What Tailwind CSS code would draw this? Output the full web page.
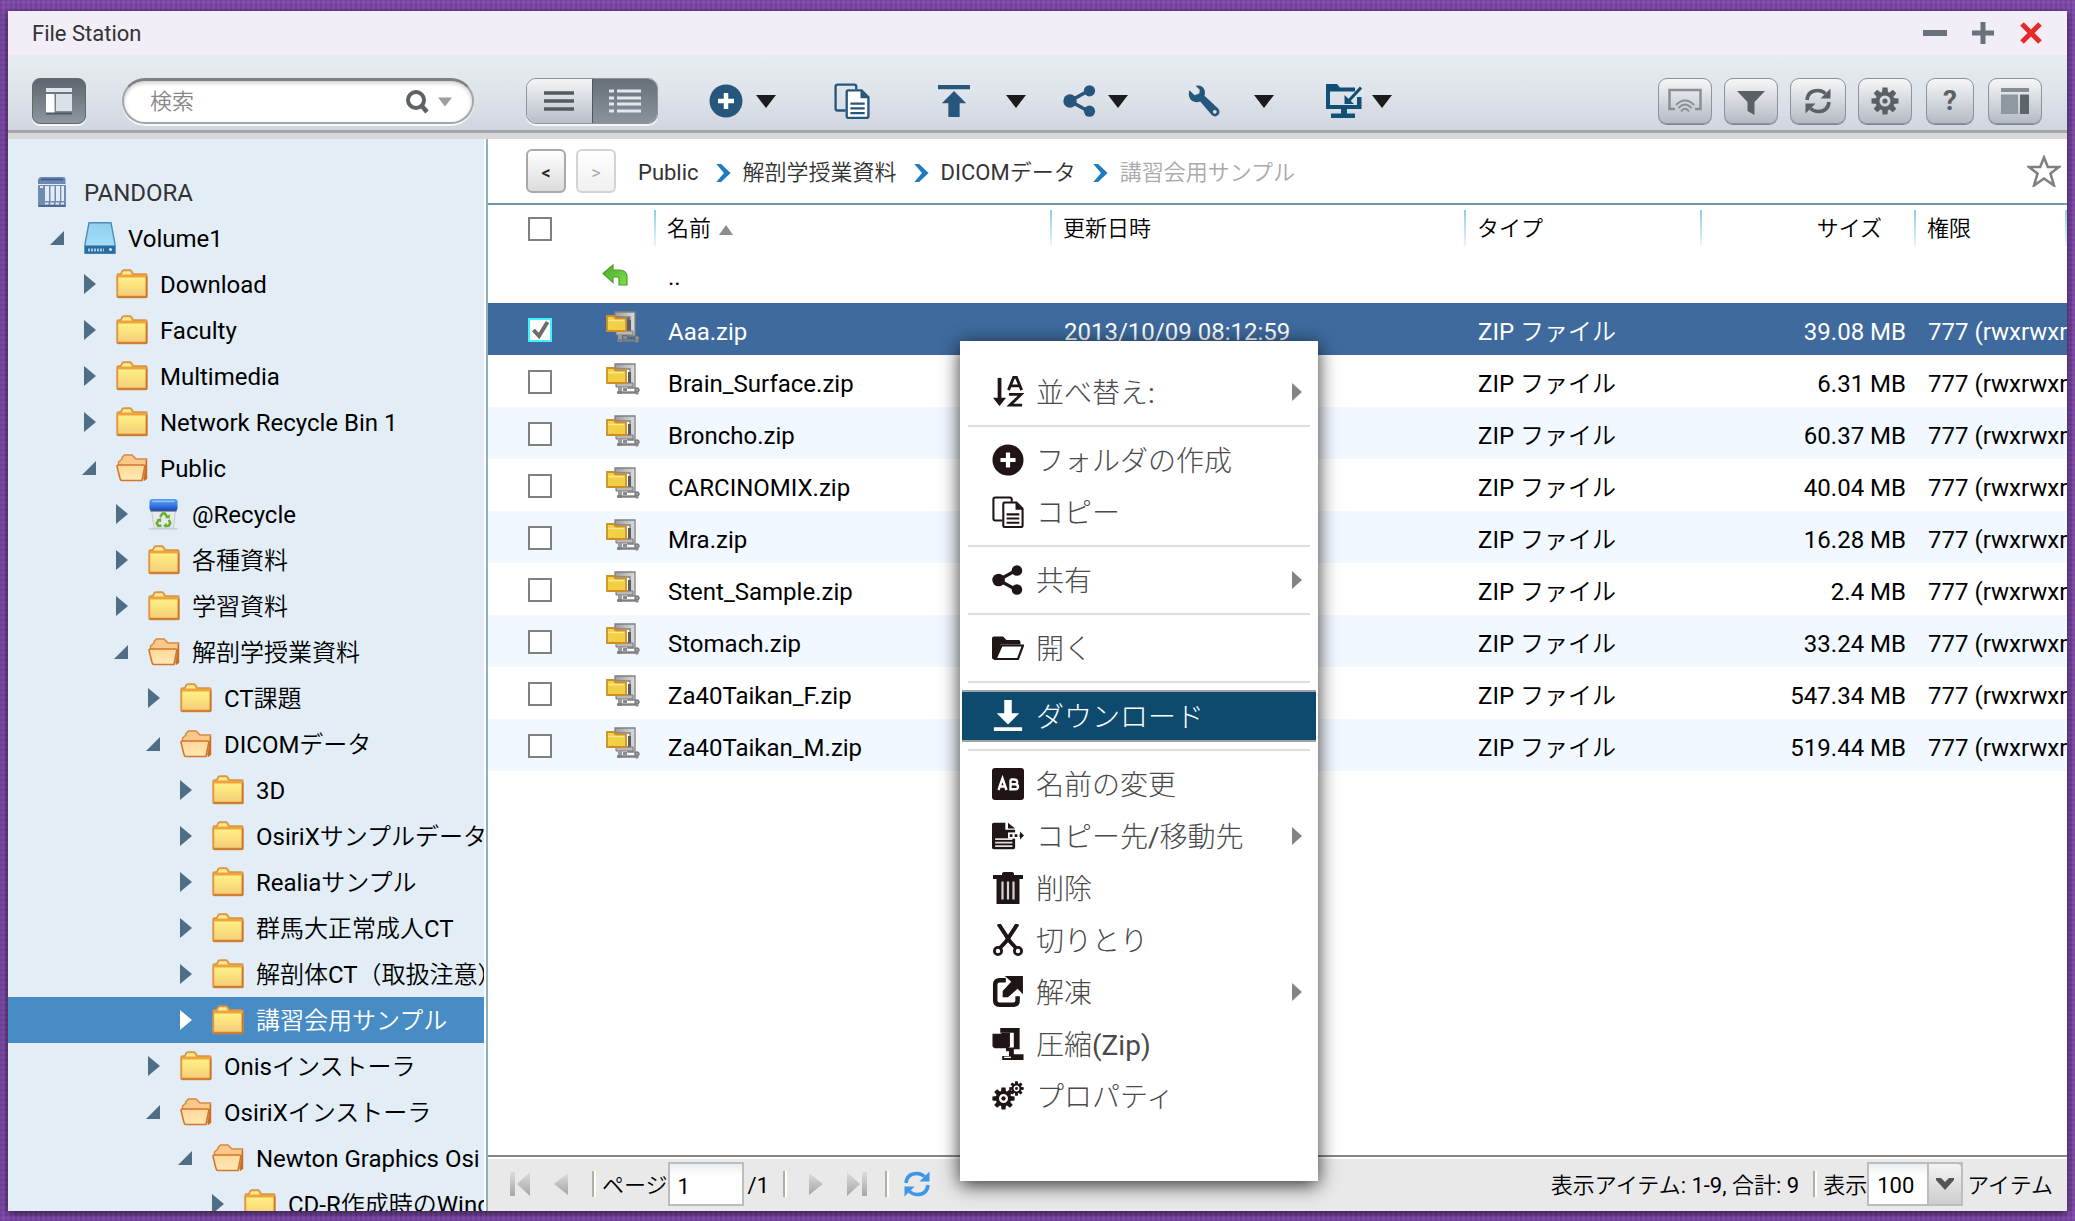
<!DOCTYPE html>
<html lang="ja">
<head>
<meta charset="utf-8">
<meta name="viewport" content="width=device-width, initial-scale=1">
<title>File Station</title>
<script src="https://cdn.jsdelivr.net/npm/@tailwindcss/browser@4"></script>
</head>
<body class="h-screen overflow-hidden bg-[#8450ae] bg-[repeating-linear-gradient(90deg,rgba(50,10,90,.14)_0_2px,transparent_2px_5px),repeating-linear-gradient(0deg,rgba(50,10,90,.1)_0_2px,transparent_2px_5px)] px-2 pt-[11px] pb-[10px] text-black [font-family:Roboto,'Noto_Sans_CJK_JP_DemiLight','Noto_Sans_CJK_JP',sans-serif]">

<!-- Shared icon shapes -->
<svg class="absolute h-0 w-0" aria-hidden="true">
  <defs>
    <linearGradient id="g-folder" x1="0" y1="0" x2="0" y2="1"><stop offset="0" stop-color="#fff08c"/><stop offset=".5" stop-color="#fbe07a"/><stop offset="1" stop-color="#f2cf80"/></linearGradient>
    <linearGradient id="g-open" x1="0" y1="0" x2="0" y2="1"><stop offset="0" stop-color="#ffd79a"/><stop offset="1" stop-color="#ffeab5"/></linearGradient>
    <linearGradient id="g-disk" x1="0" y1="0" x2="0" y2="1"><stop offset="0" stop-color="#8fd0f0"/><stop offset="1" stop-color="#a9e3fa"/></linearGradient>
    <linearGradient id="g-lid" x1="0" y1="0" x2="0" y2="1"><stop offset="0" stop-color="#5a9cf0"/><stop offset=".5" stop-color="#3d7fe4"/><stop offset="1" stop-color="#1748c4"/></linearGradient>
    <linearGradient id="g-clamp" x1="0" y1="0" x2="1" y2="0"><stop offset="0" stop-color="#9a9a9a"/><stop offset="1" stop-color="#dcdcdc"/></linearGradient>
    <linearGradient id="g-green" x1="0" y1="0" x2="1" y2="1"><stop offset="0" stop-color="#4aa62c"/><stop offset="1" stop-color="#7fe04a"/></linearGradient>
    <linearGradient id="g-nav" x1="0" y1="0" x2="0" y2="1"><stop offset="0" stop-color="#dcdcdc"/><stop offset="1" stop-color="#a6a6a6"/></linearGradient>
  </defs>
  <symbol id="i-folder" viewBox="0 0 32 30"><path d="M1 6.500Q1 5 2.500 5H4.500L6.500 1.500Q7 1 8 1H14Q15 1 15.600 2L17.500 5H29.500Q31 5 31 6.500V27Q31 28.500 29.500 28.500H2.500Q1 28.500 1 27Z" fill="#f0a53a" stroke="#dc9346" stroke-width="1.400"/><path d="M5.500 5.500L7.500 2.300H14L16 5.500Z" fill="#fdeb92"/><path d="M2.300 8.500H29.700V26.500H2.300Z" fill="url(#g-folder)"/><path d="M1.500 28H30.500V8" fill="none" stroke="#c8772b" stroke-width="1.600"/></symbol>
  <symbol id="i-folder-open" viewBox="0 0 32 28"><path d="M2.500 13V8L6 5V3.500L8.500 1H16L20 5H30.500V24H26" fill="#fac889" stroke="#da8740" stroke-width="1.500"/><path d="M30.500 6V25L28 26.500Z" fill="#c96f22" stroke="#c96f22"/><path d="M1 12.500Q1 11 3 11H27Q29 11 28.700 13L26 26.500H6Q4.500 26.500 4 24.500Z" fill="url(#g-open)" stroke="#d5762b" stroke-width="1.600"/></symbol>
  <symbol id="i-disk" viewBox="0 0 32 32"><path d="M5 .8H27L31 22V31.200H1V22Z" fill="url(#g-disk)" stroke="#4a8db8" stroke-width="1.400"/><path d="M.8 23.500H31.200V31.300H.8Z" fill="#2a6ba0"/><path d="M4 28H20" stroke="#9ccdec" stroke-width="3" stroke-dasharray="2 1"/><circle cx="26.500" cy="27.500" r="1.600" fill="#bfe6ff"/></symbol>
  <symbol id="i-nas" viewBox="0 0 28 30"><path d="M1 1.500Q1 0 3 0H25Q27.500 0 27.500 2V7H0V2Z" fill="#6c86b0"/><path d="M3 2.500H25" stroke="#3f5a86" stroke-width="1.500"/><path d="M0 8H28V30H0Z" fill="#6f8ab3"/><path d="M7 9H11V24H7ZM12.500 9H16.500V24H12.500ZM18 9H22V24H18ZM23.300 9H26V24H23.300Z" fill="#e4ecf6"/><path d="M7 26.500H26" stroke="#dfe8f3" stroke-width="2" stroke-dasharray="3.500 1.800"/><path d="M2 10H5" stroke="#dfe8f3" stroke-width="2"/><path d="M1 29H27" stroke="#435d88" stroke-width="1.500"/></symbol>
  <symbol id="i-bin" viewBox="0 0 32 33"><path d="M3 12H28L25.500 31H6Z" fill="#e9ebea" stroke="#c3c7c9"/><path d="M0 31.800H30" stroke="#c4cdd6" stroke-width="1.500"/><path d="M2 14H29V12H2Z" fill="#555e6d"/><path d="M1 4Q1 1 4 1H27Q30 1 30 4V10Q30 13 27 13H4Q1 13 1 10Z" fill="url(#g-lid)"/><path d="M4 3.500H27" stroke="#8ec4ff" stroke-width="1.600"/><g fill="none" stroke="#66b032" stroke-width="2.600"><path d="M12 19.500L14.500 16H17L19.500 20"/><path d="M21 22.500L22.500 26L21 28.500H17.500"/><path d="M13.500 28.500H10L8.500 26L11 22"/></g><path d="M17 21H22V16.500ZM18.500 25.500V31L15 28.500ZM8 22.500L13 20.500L13 25Z" fill="#66b032"/></symbol>
  <symbol id="i-zip" viewBox="0 0 34 32"><path d="M9 1H29V25H22V20H24V6H9Z" fill="url(#g-clamp)" stroke="#808080" stroke-width="1.300"/><path d="M22 9H25V20H22Z" fill="#5c5c5c"/><path d="M10 20H27V24H10Z" fill="#b9b9b9" stroke="#767676"/><path d="M12 24H16V31H12Z" fill="#9a9a9a"/><path d="M17 25H21V28H17Z" fill="#8a8a8a"/><path d="M11 29.500H31" stroke="#7d7d7d" stroke-width="2.400"/><circle cx="31" cy="27" r="2.200" fill="#9a9a9a" stroke="#666"/><circle cx="31" cy="30" r="1.700" fill="#8a8a8a"/><path d="M1 5H8L9.500 7.500H20V20H1Z" fill="#f2cf45" stroke="#cf8f26" stroke-width="1.800"/><path d="M2.500 9.500H18.500" stroke="#ffe98a" stroke-width="1.500"/></symbol>
  <symbol id="i-up" viewBox="0 0 26 22"><path d="M1 9.500L11 1V6H17Q25 6 25 13V21H17V14.500Q17 13 15 13H11V18.500Z" fill="url(#g-green)" stroke="#48a02b" stroke-width="1.200"/></symbol>
  <symbol id="i-plus" viewBox="0 0 34 34"><circle cx="17" cy="17" r="16.500" fill="currentColor"/><path d="M17 9V25M9 17H25" stroke="#fff" stroke-width="4.500"/></symbol>
  <symbol id="i-copy" viewBox="0 0 34 34"><g fill="none" stroke="currentColor" stroke-width="2.200"><path d="M11 26H3.500Q1.500 26 1.500 24V3.500Q1.500 1.500 3.500 1.500H19Q21 1.500 21 3.500V6"/><path d="M12 8.500Q12 7 13.500 7H26L32.500 13.500V31.500Q32.500 33 31 33H13.500Q12 33 12 31.500Z" fill="#fff"/></g><path d="M25 7V14.500H32.500Z" fill="currentColor"/><path d="M15.500 19.500H29M15.500 24H29M15.500 28.500H29" stroke="currentColor" stroke-width="2.200"/></symbol>
  <symbol id="i-share" viewBox="0 0 34 32"><path d="M26 5.500L7 16L26 26.500" fill="none" stroke="currentColor" stroke-width="3.600"/><circle cx="26.500" cy="5.800" r="5.600" fill="currentColor"/><circle cx="7" cy="16" r="6.700" fill="currentColor"/><circle cx="26.500" cy="26.200" r="5.600" fill="currentColor"/></symbol>
  <symbol id="i-upload" viewBox="0 0 34 34"><path d="M0 0H34V4.500H0ZM17 6.500L30 19.500H23V34H11V19.500H4Z" fill="currentColor"/></symbol>
  <symbol id="i-wrench" viewBox="0 0 36 34"><path d="M2.500 5.500L8 11L13 9L13.500 5L9 .8Q16-.8 18.500 5Q19.500 9 18.500 11.500L33 25Q36 29 33 32Q29.500 35 26 31.500L14 17.500Q8 19.500 4 16Q.5 11.500 2.500 5.500Z" fill="currentColor"/><circle cx="29.500" cy="28.500" r="2" fill="#dbe1e9"/></symbol>
  <symbol id="i-remote" viewBox="0 0 36 34"><path d="M0 0H11L14 3.500H29V7.500H4V21H31V13H35.500V25H0Z" fill="currentColor"/><path d="M15 25H21V29.500H29V34H5V29.500H15Z" fill="currentColor"/><path d="M35 3.500L23 16.500" stroke="currentColor" stroke-width="3"/><path d="M18.500 11V20H28Z" fill="currentColor"/></symbol>
  <symbol id="i-refresh" viewBox="0 0 28 28"><path d="M3 13Q4 3.500 14 3.500Q18 3.500 21.500 6.500M25 15Q24 24.500 14 24.500Q10 24.500 6.500 21.500" fill="none" stroke="currentColor" stroke-width="3.600"/><path d="M26.500 1.500V11.500H16.500ZM1.500 26.500V16.500H11.500Z" fill="currentColor"/></symbol>
  <symbol id="i-gear" viewBox="-14 -14 28 28"><g fill="currentColor"><path id="tooth" d="M-2.500 -13.500H2.500L3 -8H-3Z"/><use href="#tooth" transform="rotate(45)"/><use href="#tooth" transform="rotate(90)"/><use href="#tooth" transform="rotate(135)"/><use href="#tooth" transform="rotate(180)"/><use href="#tooth" transform="rotate(225)"/><use href="#tooth" transform="rotate(270)"/><use href="#tooth" transform="rotate(315)"/></g><circle r="7.500" fill="none" stroke="currentColor" stroke-width="4"/><circle r="2.600" fill="currentColor"/></symbol>
  <symbol id="i-caret" viewBox="0 0 20 13"><path d="M0 0H20L10 13Z" fill="currentColor"/></symbol>
  <symbol id="i-chevron" viewBox="0 0 16 19"><path d="M1 0H6L16 9.500L6 19H1L9 9.500Z" fill="#1d7bc2"/></symbol>
  <!-- context menu -->
  <symbol id="i-sort" viewBox="0 0 32 34"><path d="M7 2V26" stroke="currentColor" stroke-width="4"/><path d="M0 23H14L7 32Z" fill="currentColor"/><path d="M16.500 15L22 1.500H25L30.500 15M18 10.500H29" fill="none" stroke="currentColor" stroke-width="3"/><path d="M17 19.500H30L18 31H31" fill="none" stroke="currentColor" stroke-width="3"/></symbol>
  <symbol id="i-open" viewBox="0 0 32 25"><path d="M0 3Q0 1 2 1H11L14.500 4.500H27Q28.500 4.500 28.500 7V9H9L3 24H2Q0 24 0 22Z" fill="currentColor"/><path d="M9.500 10H31L26 23.500H3.500Z" fill="#fff" stroke="currentColor" stroke-width="2.200"/></symbol>
  <symbol id="i-download" viewBox="0 0 32 34"><path d="M12 0H20V14H28L16 26L4 14H12ZM1 29H31V33H1Z" fill="currentColor"/></symbol>
  <symbol id="i-rename" viewBox="0 0 32 32"><rect width="32" height="32" rx="3" fill="currentColor"/><g fill="none" stroke="#fff" stroke-width="2.400"><path d="M6.500 22L10.500 10.500L14.500 22M8 18.500H13.500"/><path d="M18.500 11.500H22Q25.200 11.500 25.200 14T22 16.200H18.500V11.500M18.500 16.200H22.500Q26 16.200 26 18.800T22.500 21.200H18.500Z"/></g></symbol>
  <symbol id="i-copyto" viewBox="0 0 36 30"><path d="M0 2Q0 0 2 0H15V8H26V28Q26 30 24 30H2Q0 30 0 28Z" fill="currentColor"/><path d="M18 0L26 6.500H18Z" fill="currentColor"/><path d="M3.500 18.500H23M3.500 22.500H23M3.500 26.500H23" stroke="#e0dede" stroke-width="2"/><path d="M18 11H30V18H18Z" fill="#fff"/><path d="M20 14.500H32" stroke="currentColor" stroke-width="3" stroke-dasharray="3 2.500"/><path d="M31.500 10L36 14.500L31.500 19Z" fill="currentColor"/></symbol>
  <symbol id="i-trash" viewBox="0 0 30 32"><path d="M9 2Q9 0 11 0H19Q21 0 21 2V3H30V7H0V3H9ZM3.500 7H26.500V32H3.500Z" fill="currentColor"/><path d="M9.500 9.500V27.500M15 9.500V27.500M20.500 9.500V27.500" stroke="#d6d3d3" stroke-width="2.200"/></symbol>
  <symbol id="i-cut" viewBox="0 0 30 32"><path d="M5.500 0L17 17.500L23 24M24.500 0L13 17.500L7 24" fill="none" stroke="currentColor" stroke-width="4"/><circle cx="5" cy="27" r="3.600" fill="#fff" stroke="currentColor" stroke-width="2.800"/><circle cx="25" cy="27" r="3.600" fill="#fff" stroke="currentColor" stroke-width="2.800"/></symbol>
  <symbol id="i-extract" viewBox="0 0 30 30"><path d="M13 4H7Q3 4 3 8V23Q3 27 7 27H20Q24 27 24 23V19" fill="none" stroke="currentColor" stroke-width="4.200"/><path d="M12 0H29V17L24 12L15 20H10V14L18 5.500Z" fill="currentColor"/></symbol>
  <symbol id="i-compress" viewBox="0 0 32 33"><path d="M8 0H28V22H22V27H32V33H10V29H17V24H14V20H22V5H8Z" fill="currentColor"/><path d="M0 6H8L10 5H18V19L16 21H2L0 19Z" fill="currentColor"/><path d="M12 29.500H19V31H12Z" fill="#fff"/></symbol>
  <symbol id="i-gears" viewBox="0 0 32 30"><use href="#i-gear" x="0" y="6" width="23" height="23"/><use href="#i-gear" x="17" y="0" width="15" height="15"/></symbol>
  <symbol id="i-right" viewBox="0 0 12 20"><path d="M0 0L12 10L0 20Z" fill="currentColor"/></symbol>
</svg>

<div class="relative flex h-full flex-col overflow-hidden bg-white shadow-[0_2px_8px_rgba(0,0,0,.7)]">

  <header class="flex h-11 shrink-0 items-center justify-between bg-[#f2edf6] pr-6 pl-6">
    <h1 class="pt-0.5 text-[22px] leading-7 font-normal text-[#333]">File Station</h1>
    <div class="flex items-center gap-6 text-[#69727a]">
      <button type="button" aria-label="最小化"><svg class="h-6 w-6" viewBox="0 0 24 24"><path d="M0 9H24V15H0Z" fill="currentColor"/></svg></button>
      <button type="button" aria-label="最大化"><svg class="h-6 w-6" viewBox="0 0 24 24"><path d="M1 9.500H9.500V1H14.500V9.500H23V14.500H14.500V23H9.500V14.500H1Z" fill="currentColor"/></svg></button>
      <button type="button" aria-label="閉じる" class="text-[#e8292b]"><svg class="h-6 w-6" viewBox="0 0 24 24"><path d="M3 3L21 21M21 3L3 21" stroke="currentColor" stroke-width="5"/></svg></button>
    </div>
  </header>

  <div class="flex h-[84px] shrink-0 items-center border-b-[6px] border-[#d9d9d9] bg-linear-to-b from-[#e7ecef] via-[#dfe4eb] to-[#cfd4de] pt-3.5 pr-[25px] pl-6 shadow-[inset_0_-3px_0_#a3a7aa]">
    <button type="button" aria-label="左パネル" class="flex h-[46px] w-[54px] items-center justify-center rounded-lg border border-[#62696f] bg-linear-to-b from-[#5e666e] to-[#8e969e] shadow-[0_2px_0_#f4f6f8]">
      <svg class="h-7 w-7" viewBox="0 0 28 28"><path d="M1 1H27V5H1Z" fill="#dfe5ec"/><path d="M1 7H9.500V26H1Z" fill="#fff"/><path d="M11 7H27V24H11Z" fill="#dbe1e9"/><path d="M1 26.500H27" stroke="#4e565e" stroke-width="2"/></svg>
    </button>
    <div class="ml-9 flex h-[46px] w-[352px] items-center rounded-full border-2 border-t-[3px] border-[#a3a6a9] border-t-[#7d8082] bg-white pr-5 pl-[26px] shadow-[inset_0_2px_4px_rgba(0,0,0,.2),0_2px_0_#f4f6f8]">
      <input type="search" aria-label="検索" placeholder="検索" class="min-w-0 flex-1 bg-transparent text-[22px] leading-7 font-light text-[#555] outline-none placeholder:text-[#888]">
      <button type="button" aria-label="検索する" class="flex items-center gap-2">
        <svg class="h-6 w-6" viewBox="0 0 24 24"><circle cx="10" cy="10" r="8" fill="none" stroke="#5d6266" stroke-width="4"/><path d="M15 15L21 22" stroke="#5d6266" stroke-width="4.500"/></svg>
        <svg class="h-[10px] w-[14px] text-[#9a9ea2]"><use href="#i-caret"/></svg>
      </button>
    </div>
    <div class="ml-[52px] flex h-[46px] w-[132px] overflow-hidden rounded-[10px] border border-[#8d9399] shadow-[0_2px_0_#f4f6f8]">
      <button type="button" aria-label="一覧" class="flex flex-1 items-center justify-center bg-linear-to-b from-[#f3f5f7] to-[#b9bfc8] text-[#555a60]"><svg class="h-6 w-[30px]" viewBox="0 0 30 24"><path d="M0 4H30M0 12H30M0 20H30" stroke="currentColor" stroke-width="3.600"/></svg></button>
      <button type="button" aria-label="詳細" aria-pressed="true" class="flex flex-1 items-center justify-center border-l border-[#50575e] bg-linear-to-b from-[#676f77] to-[#8b939c] text-[#e3e8ee]"><svg class="h-6 w-8" viewBox="0 0 32 24"><path d="M0 2H5M8 2H32M0 9H5M8 9H32M0 15H5M8 15H32M0 22H5M8 22H32" stroke="currentColor" stroke-width="3.200"/></svg></button>
    </div>

    <div class="flex items-center text-[#27567c]">
      <button type="button" aria-label="作成" class="ml-[50px] flex items-center gap-3"><svg class="h-[34px] w-9"><use href="#i-plus"/></svg><svg class="h-[13px] w-5 text-[#1b1b1b]"><use href="#i-caret"/></svg></button>
      <button type="button" aria-label="コピー" class="ml-[58px]"><svg class="h-9 w-9"><use href="#i-copy"/></svg></button>
      <button type="button" aria-label="アップロード" class="ml-[68px] flex items-center gap-9"><svg class="h-8 w-8"><use href="#i-upload"/></svg><svg class="h-[13px] w-5 text-[#1b1b1b]"><use href="#i-caret"/></svg></button>
      <button type="button" aria-label="共有" class="ml-9 flex items-center gap-[10px]"><svg class="h-8 w-9"><use href="#i-share"/></svg><svg class="h-[13px] w-5 text-[#1b1b1b]"><use href="#i-caret"/></svg></button>
      <button type="button" aria-label="ツール" class="ml-[58px] flex items-center gap-8"><svg class="h-8 w-9"><use href="#i-wrench"/></svg><svg class="h-[13px] w-5 text-[#1b1b1b]"><use href="#i-caret"/></svg></button>
      <button type="button" aria-label="リモート接続" class="ml-[52px] flex items-center gap-[10px] text-[#124f74]"><svg class="h-[34px] w-9"><use href="#i-remote"/></svg><svg class="h-[13px] w-5 text-[#1b1b1b]"><use href="#i-caret"/></svg></button>
    </div>

    <div class="ml-auto flex items-center gap-3 text-[#5b6066] *:flex *:h-[46px] *:items-center *:justify-center *:rounded-[9px] *:border *:border-[#8c939e] *:bg-linear-to-b *:from-[#f6f7f9] *:to-[#b5bac3] *:shadow-[0_1px_0_#7e8590]">
      <button type="button" aria-label="キャスト" class="w-[54px]"><svg class="h-[26px] w-[34px]" viewBox="0 0 34 26"><path d="M7 21H1.500V2H32.500V21H27" fill="none" stroke="#8a8f94" stroke-width="2.500"/><g fill="none" stroke="#8a8f94" stroke-width="2"><path d="M8 17Q17 8 26 17"/><path d="M10.500 20Q17 13 23.500 20"/><path d="M13 23.500Q17 18 21 23.500"/></g></svg></button>
      <button type="button" aria-label="フィルタ" class="w-[54px]"><svg class="mt-1 h-6 w-7" viewBox="0 0 28 24"><path d="M0 0H28L17.500 11V24L10.500 20V11Z" fill="currentColor"/></svg></button>
      <button type="button" aria-label="更新" class="w-[56px]"><svg class="h-7 w-7"><use href="#i-refresh"/></svg></button>
      <button type="button" aria-label="設定" class="w-[54px]"><svg class="h-7 w-7"><use href="#i-gear"/></svg></button>
      <button type="button" aria-label="ヘルプ" class="mx-0.5 w-[48px] text-[28px] leading-8 font-bold">?</button>
      <button type="button" aria-label="右パネル" class="w-[54px]"><svg class="h-[26px] w-7" viewBox="0 0 28 26"><path d="M0 0H28V4H0Z" fill="#858d95"/><path d="M0 6.500H17V26H0Z" fill="#8f979f"/><path d="M19 6.500H28V26H19Z" fill="#5d646b"/></svg></button>
    </div>
  </div>

  <div class="flex min-h-0 flex-1">
    <nav aria-label="フォルダ" class="w-[478px] shrink-0 overflow-hidden border-r-2 border-white bg-[#e3edf6] pt-[30px]">
      <ul id="tree" class="text-[24px] leading-[46px] whitespace-nowrap"></ul>
    </nav>

    <main class="flex min-w-0 flex-1 flex-col border-l-2 border-[#8fb1bf]">
      <div class="flex h-[66px] shrink-0 items-center border-b-2 border-[#7099ad] pr-1.5 pl-[38px] text-[22px] leading-7 text-[#333]">
        <button type="button" aria-label="戻る" class="h-11 w-10 rounded-md border-2 border-[#a9a9a9] bg-linear-to-b from-white to-[#dcdcdc] pt-1 text-[18px] font-medium text-[#222]">&lt;</button>
        <button type="button" aria-label="進む" class="ml-[10px] h-11 w-10 rounded-md border-2 border-[#d3d3d3] bg-linear-to-b from-white to-[#f0f0f0] pt-1 text-[18px] text-[#aaa]">&gt;</button>
        <ol class="ml-[22px] flex items-center pt-1 whitespace-nowrap">
          <li><a href="#">Public</a></li>
          <li class="flex items-center"><svg class="mr-3 ml-4 h-[18px] w-4"><use href="#i-chevron"/></svg><a href="#">解剖学授業資料</a></li>
          <li class="flex items-center"><svg class="mr-3 ml-4 h-[18px] w-4"><use href="#i-chevron"/></svg><a href="#">DICOMデータ</a></li>
          <li class="flex items-center font-light text-[#aaa]" aria-current="page"><svg class="mr-3 ml-4 h-[18px] w-4"><use href="#i-chevron"/></svg>講習会用サンプル</li>
        </ol>
        <button type="button" aria-label="お気に入り" class="ml-auto"><svg class="h-8 w-[34px]" viewBox="0 0 34 32"><path d="M17 2.500L20.800 12H32L23.500 18.500L27 30.500L17 23.500L7 30.500L10.500 18.500L2 12H13.200Z" fill="#fff" stroke="#808080" stroke-width="2.600"/></svg></button>
      </div>

      <div class="min-h-0 flex-1 overflow-hidden">
        <table class="w-full table-fixed border-collapse whitespace-nowrap">
          <colgroup><col class="w-[100px]"><col class="w-[66px]"><col class="w-[396px]"><col class="w-[414px]"><col class="w-[236px]"><col class="w-[214px]"><col></colgroup>
          <thead>
            <tr class="h-[46px] text-left text-[22px] leading-7 *:p-0 *:font-normal">
              <th><input type="checkbox" aria-label="すべて選択" class="mt-0.5 ml-10 block h-6 w-6 appearance-none border-2 border-[#808080] bg-white"></th>
              <th></th>
              <th><span class="flex items-center"><i class="h-9 w-0.5 bg-linear-to-b from-[#8fcfdf] to-[#e9f6f9]"></i><span class="ml-[11px] pt-0.5">名前</span><svg class="mt-1 ml-2 h-2.5 w-3.5" viewBox="0 0 14 10"><path d="M7 0L14 10H0Z" fill="#8c8c8c"/></svg></span></th>
              <th><span class="flex items-center"><i class="h-9 w-0.5 bg-linear-to-b from-[#8fcfdf] to-[#e9f6f9]"></i><span class="ml-[11px] pt-0.5">更新日時</span></span></th>
              <th><span class="flex items-center"><i class="h-9 w-0.5 bg-linear-to-b from-[#8fcfdf] to-[#e9f6f9]"></i><span class="ml-[11px] pt-0.5">タイプ</span></span></th>
              <th><span class="flex items-center justify-between"><i class="h-9 w-0.5 bg-linear-to-b from-[#8fcfdf] to-[#e9f6f9]"></i><span class="mr-8 pt-0.5">サイズ</span></span></th>
              <th><span class="flex items-center"><i class="h-9 w-0.5 bg-linear-to-b from-[#8fcfdf] to-[#e9f6f9]"></i><span class="ml-[11px] pt-0.5">権限</span><i class="ml-auto h-9 w-0.5 bg-linear-to-b from-[#8fcfdf] to-[#e9f6f9]"></i></span></th>
            </tr>
          </thead>
          <tbody id="files" class="text-[24px] leading-7">
            <tr class="h-[52px] *:p-0">
              <td></td>
              <td><a href="#" aria-label="上のフォルダへ"><svg class="mb-1 ml-3.5 h-[22px] w-[26px]"><use href="#i-up"/></svg></a></td>
              <td class="pl-3.5!">..</td><td></td><td></td><td></td><td></td>
            </tr>
          </tbody>
        </table>
      </div>

      <footer class="flex h-14 shrink-0 items-center border-t-2 border-[#858585] bg-[#e9e9e9] pr-3.5 pl-[22px] text-[22px] leading-7 whitespace-nowrap shadow-[inset_0_2px_0_#fff]">
        <button type="button" aria-label="最初のページ"><svg class="h-6 w-5" viewBox="0 0 20 24"><path d="M0 0H5V24H0ZM20 0V24L7 12Z" fill="url(#g-nav)"/></svg></button>
        <button type="button" aria-label="前のページ" class="ml-6"><svg class="h-6 w-3.5" viewBox="0 0 14 24"><path d="M14 1V23L0 12Z" fill="url(#g-nav)"/></svg></button>
        <i class="ml-6 h-[26px] w-0.5 bg-[#b3ae9d] shadow-[2px_0_0_#fff]"></i>
        <label for="page" class="ml-2 pt-1">ページ</label>
        <input id="page" type="text" value="1" class="h-11 w-[76px] border-2 border-[#bdbdbd] bg-linear-to-b from-[#e9eef1] to-white to-30% pt-1 pl-2">
        <span class="ml-1 pt-1">/1</span>
        <i class="ml-3.5 h-[26px] w-0.5 bg-[#b3ae9d] shadow-[2px_0_0_#fff]"></i>
        <button type="button" aria-label="次のページ" class="ml-6"><svg class="h-6 w-3.5" viewBox="0 0 14 24"><path d="M0 1V23L14 12Z" fill="url(#g-nav)"/></svg></button>
        <button type="button" aria-label="最後のページ" class="ml-6"><svg class="h-6 w-5" viewBox="0 0 20 24"><path d="M15 0H20V24H15ZM0 0V24L13 12Z" fill="url(#g-nav)"/></svg></button>
        <i class="ml-[18px] h-[26px] w-0.5 bg-[#b3ae9d] shadow-[2px_0_0_#fff]"></i>
        <button type="button" aria-label="再読み込み" class="ml-4 text-[#3d97e6]"><svg class="h-7 w-7"><use href="#i-refresh"/></svg></button>
        <p class="ml-auto pt-1">表示アイテム: 1-9, 合計: 9</p>
        <i class="ml-3.5 h-[26px] w-0.5 bg-[#b3ae9d] shadow-[2px_0_0_#fff]"></i>
        <label for="per-page" class="ml-2 pt-1">表示</label>
        <span class="relative">
          <select id="per-page" class="block h-11 w-24 appearance-none border-2 border-[#bdbdbd] bg-linear-to-b from-[#e9eef1] to-white to-30% pt-1 pl-2"><option>100</option></select>
          <span class="pointer-events-none absolute top-0 right-0 flex h-11 w-9 items-center justify-center rounded-tr-md border-2 border-[#bdbdbd] bg-linear-to-b from-[#f4f4f4] to-[#cdcdcd]"><svg class="h-3 w-[18px]" viewBox="0 0 18 12"><path d="M0 0H5L9 4L13 0H18V2L9 12L0 2Z" fill="#555"/></svg></span>
        </span>
        <span class="ml-1 pt-1">アイテム</span>
      </footer>
    </main>
  </div>

  <!-- Context menu of the selected file -->
  <ul id="menu" role="menu" class="absolute top-[330px] left-[952px] h-[840px] w-[358px] bg-white pt-[25px] text-[28px] leading-[48px] text-[#4a4a4a] shadow-[0_4px_18px_rgba(0,0,0,.8)] [font-family:Roboto,'Noto_Sans_CJK_JP_Light','Noto_Sans_CJK_JP',sans-serif]"></ul>
</div>

<script>
  // [level, state, icon, label]; state: o = expanded, c = collapsed, s = selected
  const tree = [
    [1, 'o', 'disk', 'Volume1'],
    [2, 'c', 'folder', 'Download'],
    [2, 'c', 'folder', 'Faculty'],
    [2, 'c', 'folder', 'Multimedia'],
    [2, 'c', 'folder', 'Network Recycle Bin 1'],
    [2, 'o', 'folder-open', 'Public'],
    [3, 'c', 'bin', '@Recycle'],
    [3, 'c', 'folder', '各種資料'],
    [3, 'c', 'folder', '学習資料'],
    [3, 'o', 'folder-open', '解剖学授業資料'],
    [4, 'c', 'folder', 'CT課題'],
    [4, 'o', 'folder-open', 'DICOMデータ'],
    [5, 'c', 'folder', '3D'],
    [5, 'c', 'folder', 'OsiriXサンプルデータ'],
    [5, 'c', 'folder', 'Realiaサンプル'],
    [5, 'c', 'folder', '群馬大正常成人CT'],
    [5, 'c', 'folder', '解剖体CT（取扱注意）'],
    [5, 's', 'folder', '講習会用サンプル'],
    [4, 'c', 'folder', 'Onisインストーラ'],
    [4, 'o', 'folder-open', 'OsiriXインストーラ'],
    [5, 'o', 'folder-open', 'Newton Graphics Osi'],
    [6, 'c', 'folder', 'CD-R作成時のWindows'],
  ];
  const arrow = {
    o: '<svg class="h-3.5 w-3.5" viewBox="0 0 14 14"><path d="M14 0V14H0Z" fill="#4f6d84"/></svg>',
    c: '<svg class="h-5 w-3 text-[#4f6d84]"><use href="#i-right"/></svg>',
    s: '<svg class="h-5 w-3 text-white"><use href="#i-right"/></svg>',
  };
  document.getElementById('tree').innerHTML =
    '<li class="flex h-[46px] items-center pl-[30px] text-[#333]"><svg class="mr-[18px] h-[30px] w-7 shrink-0"><use href="#i-nas"/></svg><a href="#" class="pt-0.5">PANDORA</a></li>' +
    tree.map(([level, state, icon, label]) => `
      <li class="flex h-[46px] items-center ${state === 's' ? 'bg-[#478cc4] text-white' : ''}" style="padding-left:${level * 32 + 10}px">
        <span class="mr-5 flex w-3.5 shrink-0 justify-end">${arrow[state]}</span>
        <svg class="mr-3 h-8 w-8 shrink-0"><use href="#i-${icon}"/></svg>
        <a href="#" class="pt-0.5">${label}</a>
      </li>`).join('');

  const files = [
    ['Aaa.zip', '39.08 MB'], ['Brain_Surface.zip', '6.31 MB'], ['Broncho.zip', '60.37 MB'],
    ['CARCINOMIX.zip', '40.04 MB'], ['Mra.zip', '16.28 MB'], ['Stent_Sample.zip', '2.4 MB'],
    ['Stomach.zip', '33.24 MB'], ['Za40Taikan_F.zip', '547.34 MB'], ['Za40Taikan_M.zip', '519.44 MB'],
  ];
  document.getElementById('files').insertAdjacentHTML('beforeend', files.map(([name, size], i) => `
    <tr class="h-[52px] *:p-0 ${i === 0 ? 'bg-[#3e6a9d] text-white' : i % 2 ? 'bg-white' : 'bg-[#f1f8ff]'}">
      <td><label class="relative mt-0.5 ml-10 block h-6 w-6">
        <input type="checkbox" aria-label="${name}" ${i === 0 ? 'checked' : ''} class="block h-6 w-6 appearance-none border-2 border-[#808080] bg-white checked:border-[#3ef3ff]">
        ${i === 0 ? '<svg class="pointer-events-none absolute inset-0 h-6 w-6" viewBox="0 0 24 24"><path d="M5.500 12L11 18L19.500 4" fill="none" stroke="#6c6c6c" stroke-width="4"/></svg>' : ''}
      </label></td>
      <td><svg class="mb-1 ml-[18px] h-8 w-[34px]"><use href="#i-zip"/></svg></td>
      <td class="pt-1.5! pl-3.5!">${name}</td>
      <td class="pt-1.5! pl-3.5!">${i === 0 ? '2013/10/09 08:12:59' : ''}</td>
      <td class="pt-1.5! pl-3.5!">ZIP ファイル</td>
      <td class="pt-1.5! pr-2! text-right">${size}</td>
      <td class="overflow-hidden pt-1.5! pl-3.5!">777 (rwxrwxrwx)</td>
    </tr>`).join(''));

  // [icon, label, has submenu]; null draws a separator
  const menu = [
    ['sort', '並べ替え:', true], null,
    ['plus', 'フォルダの作成'], ['copy', 'コピー'], null,
    ['share', '共有', true], null,
    ['open', '開く'], null,
    ['download', 'ダウンロード'], null,
    ['rename', '名前の変更'], ['copyto', 'コピー先/移動先', true], ['trash', '削除'], ['cut', '切りとり'],
    ['extract', '解凍', true], ['compress', '圧縮(Zip)'], ['gears', 'プロパティ'],
  ];
  document.getElementById('menu').innerHTML = menu.map(item => item ? `
    <li role="none" class="px-0.5"><button type="button" role="menuitem" class="flex h-[52px] w-full items-center px-3.5 pl-[30px] ${item[0] === 'download' ? 'border-y-2 border-[#a0a4a8] bg-[#0d4a6d] text-white' : ''}">
      <svg class="mr-3 h-8 w-8 shrink-0 ${item[0] === 'download' ? 'text-white' : 'text-[#1f1514]'}"><use href="#i-${item[0]}"/></svg>
      <span class="pt-1">${item[1]}</span>
      ${item[2] ? '<svg class="ml-auto h-[18px] w-2.5 text-[#848484]" viewBox="0 0 10 18"><path d="M0 0L10 9L0 18Z" fill="currentColor"/></svg>' : ''}
    </button></li>` : '<li role="separator" class="px-2 py-[7px]"><div class="h-0.5 bg-[#dfdfdf]"></div></li>').join('');
</script>
</body>
</html>
